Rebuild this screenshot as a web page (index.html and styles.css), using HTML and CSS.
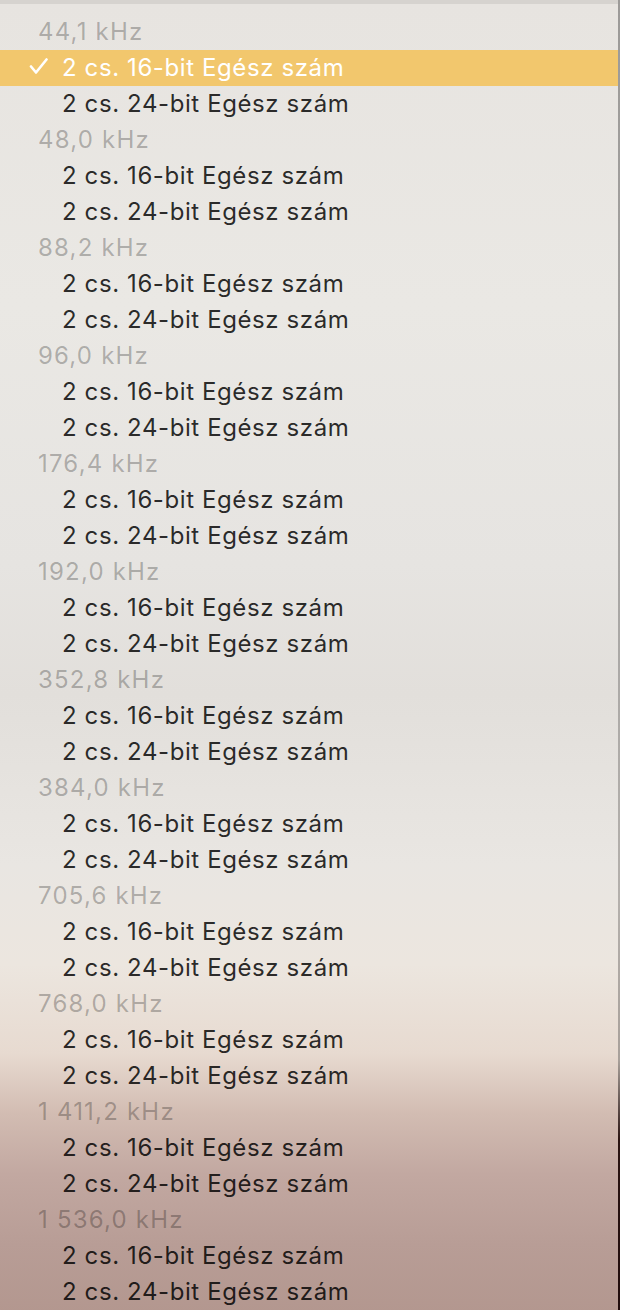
FILE: index.html
```html
<!DOCTYPE html>
<html lang="hu">
<head>
<meta charset="utf-8">
<title>Formátum</title>
<link rel="stylesheet" href="styles.css">
</head>
<body>
<div class="screen">
  <div class="menu">
    <div class="row header">44,1 kHz</div>
    <div class="row item selected"><span class="check"><svg width="20" height="18" viewBox="0 0 20 18"><path d="M2 8.5 L7 14.5 L17.5 1.5" fill="none" stroke="#fff" stroke-width="2.6" stroke-linecap="round" stroke-linejoin="round"/></svg></span>2 cs. 16-bit Egész szám</div>
    <div class="row item"><span class="check"></span>2 cs. 24-bit Egész szám</div>
    <div class="row header">48,0 kHz</div>
    <div class="row item"><span class="check"></span>2 cs. 16-bit Egész szám</div>
    <div class="row item"><span class="check"></span>2 cs. 24-bit Egész szám</div>
    <div class="row header">88,2 kHz</div>
    <div class="row item"><span class="check"></span>2 cs. 16-bit Egész szám</div>
    <div class="row item"><span class="check"></span>2 cs. 24-bit Egész szám</div>
    <div class="row header">96,0 kHz</div>
    <div class="row item"><span class="check"></span>2 cs. 16-bit Egész szám</div>
    <div class="row item"><span class="check"></span>2 cs. 24-bit Egész szám</div>
    <div class="row header">176,4 kHz</div>
    <div class="row item"><span class="check"></span>2 cs. 16-bit Egész szám</div>
    <div class="row item"><span class="check"></span>2 cs. 24-bit Egész szám</div>
    <div class="row header">192,0 kHz</div>
    <div class="row item"><span class="check"></span>2 cs. 16-bit Egész szám</div>
    <div class="row item"><span class="check"></span>2 cs. 24-bit Egész szám</div>
    <div class="row header">352,8 kHz</div>
    <div class="row item"><span class="check"></span>2 cs. 16-bit Egész szám</div>
    <div class="row item"><span class="check"></span>2 cs. 24-bit Egész szám</div>
    <div class="row header">384,0 kHz</div>
    <div class="row item"><span class="check"></span>2 cs. 16-bit Egész szám</div>
    <div class="row item"><span class="check"></span>2 cs. 24-bit Egész szám</div>
    <div class="row header">705,6 kHz</div>
    <div class="row item"><span class="check"></span>2 cs. 16-bit Egész szám</div>
    <div class="row item"><span class="check"></span>2 cs. 24-bit Egész szám</div>
    <div class="row header">768,0 kHz</div>
    <div class="row item"><span class="check"></span>2 cs. 16-bit Egész szám</div>
    <div class="row item"><span class="check"></span>2 cs. 24-bit Egész szám</div>
    <div class="row header">1 411,2 kHz</div>
    <div class="row item"><span class="check"></span>2 cs. 16-bit Egész szám</div>
    <div class="row item"><span class="check"></span>2 cs. 24-bit Egész szám</div>
    <div class="row header">1 536,0 kHz</div>
    <div class="row item"><span class="check"></span>2 cs. 16-bit Egész szám</div>
    <div class="row item"><span class="check"></span>2 cs. 24-bit Egész szám</div>
  </div>
  <div class="edge"></div>
</div>
</body>
</html>
```

FILE: styles.css
```css
html, body {
  margin: 0;
  padding: 0;
  height: 1310px;
  overflow: hidden;
}

body {
  font-family: Inter, "Noto Sans", "Liberation Sans", sans-serif;
}

.screen {
  display: flex;
  height: 1310px;
}

.menu {
  flex: 1;
  display: flex;
  flex-direction: column;
  border-top: 4px solid #d6d3cf;
  padding-top: 10px;
  box-sizing: border-box;
  background: linear-gradient(to bottom,
    #e7e4e0 0px,
    #eae8e4 300px,
    #e6e4e1 560px,
    #e2dfdb 690px,
    #e9e6e2 860px,
    #ece6df 960px,
    #e7dad0 1050px,
    #d2bcb2 1110px,
    #c2a8a1 1170px,
    #b89d96 1240px,
    #b3978f 1310px);
}

.edge {
  width: 2px;
  background: linear-gradient(to bottom,
    #9c9a98 0px,
    #a9a7a5 600px,
    #b4b0ac 900px,
    #a8a09a 1060px,
    #2a1412 1140px,
    #200c0c 1310px);
}

.row {
  height: 36px;
  box-sizing: border-box;
  padding-bottom: 2px;
  display: flex;
  align-items: center;
  font-size: 24px;
  letter-spacing: 0.6px;
  white-space: nowrap;
}

.header {
  padding-left: 38px;
  letter-spacing: 1.2px;
  color: rgba(0, 0, 0, 0.27);
}

.item {
  padding-left: 29px;
  color: rgba(0, 0, 0, 0.84);
}

.check {
  width: 33px;
  display: flex;
  align-items: center;
  flex: none;
}

.selected {
  background: #f2c76d;
  color: #fff;
}
```
